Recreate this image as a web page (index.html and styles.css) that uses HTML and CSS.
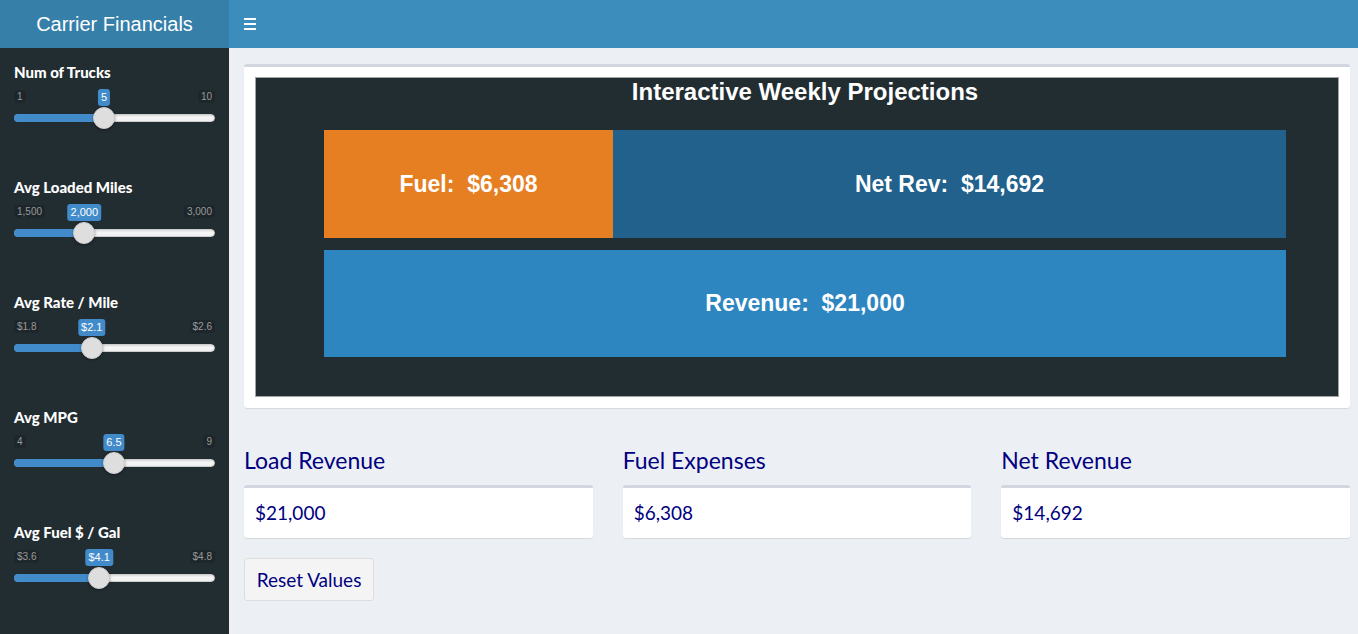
FILE: index.html
```html
<!DOCTYPE html>
<html>
<head>
<meta charset="utf-8">
<title>Carrier Financials</title>
<link rel="stylesheet" href="styles.css">
</head>
<body>
<header class="topbar">
  <div class="logo">Carrier Financials</div>
  <nav class="navbar">
    <span class="hamburger"><span></span><span></span><span></span></span>
  </nav>
</header>
<div class="layout">
  <aside class="sidebar">
    <div class="slider-group">
      <div class="slider-label">Num of Trucks</div>
      <div class="irs">
        <span class="irs-min">1</span>
        <span class="irs-max">10</span>
        <div class="irs-line"></div>
        <div class="irs-bar" style="width:90.1px"></div>
        <span class="irs-single" style="left:90.1px">5</span>
        <span class="irs-handle" style="left:79.1px"></span>
      </div>
    </div>
    <div class="slider-group">
      <div class="slider-label">Avg Loaded Miles</div>
      <div class="irs">
        <span class="irs-min">1,500</span>
        <span class="irs-max">3,000</span>
        <div class="irs-line"></div>
        <div class="irs-bar" style="width:70.3px"></div>
        <span class="irs-single" style="left:70.3px">2,000</span>
        <span class="irs-handle" style="left:59.3px"></span>
      </div>
    </div>
    <div class="slider-group">
      <div class="slider-label">Avg Rate / Mile</div>
      <div class="irs">
        <span class="irs-min">$1.8</span>
        <span class="irs-max">$2.6</span>
        <div class="irs-line"></div>
        <div class="irs-bar" style="width:77.75px"></div>
        <span class="irs-single" style="left:77.75px">$2.1</span>
        <span class="irs-handle" style="left:66.75px"></span>
      </div>
    </div>
    <div class="slider-group">
      <div class="slider-label">Avg MPG</div>
      <div class="irs">
        <span class="irs-min">4</span>
        <span class="irs-max">9</span>
        <div class="irs-line"></div>
        <div class="irs-bar" style="width:100px"></div>
        <span class="irs-single" style="left:100px">6.5</span>
        <span class="irs-handle" style="left:89px"></span>
      </div>
    </div>
    <div class="slider-group">
      <div class="slider-label">Avg Fuel $ / Gal</div>
      <div class="irs">
        <span class="irs-min">$3.6</span>
        <span class="irs-max">$4.8</span>
        <div class="irs-line"></div>
        <div class="irs-bar" style="width:85.2px"></div>
        <span class="irs-single" style="left:85.2px">$4.1</span>
        <span class="irs-handle" style="left:74.2px"></span>
      </div>
    </div>
  </aside>
  <main class="content">
    <section class="box">
      <div class="plot">
        <div class="plot-inner">
          <div class="plot-title">Interactive Weekly Projections</div>
          <div class="bar-row">
            <div class="bar bar-fuel" style="width:289px">Fuel:  $6,308</div>
            <div class="bar bar-net">Net Rev:  $14,692</div>
          </div>
          <div class="bar bar-rev">Revenue:  $21,000</div>
        </div>
      </div>
    </section>
    <section class="stats">
      <div class="stat">
        <h3 class="stat-title">Load Revenue</h3>
        <div class="stat-box">$21,000</div>
      </div>
      <div class="stat">
        <h3 class="stat-title">Fuel Expenses</h3>
        <div class="stat-box">$6,308</div>
      </div>
      <div class="stat">
        <h3 class="stat-title">Net Revenue</h3>
        <div class="stat-box">$14,692</div>
      </div>
    </section>
    <button class="btn-reset">Reset Values</button>
  </main>
</div>
</body>
</html>
```

FILE: styles.css
```css
* { box-sizing: border-box; }
html, body { margin: 0; padding: 0; height: 100%; }
body {
  font-family: "Lato", "Liberation Sans", sans-serif;
  background: #ecf0f5;
  overflow: hidden;
}
.topbar {
  display: flex;
  height: 48px;
}
.logo {
  width: 229px;
  background: #367fa9;
  color: #fff;
  font-family: "Liberation Sans", Arial, sans-serif;
  font-size: 20px;
  line-height: 48px;
  text-align: center;
}
.navbar {
  flex: 1;
  background: #3c8dbc;
  display: flex;
  align-items: center;
  padding-left: 15px;
}
.hamburger {
  display: flex;
  flex-direction: column;
  gap: 3px;
  width: 12px;
}
.hamburger span {
  display: block;
  height: 2px;
  background: #fff;
}
.layout {
  display: flex;
  height: calc(100% - 48px);
}
.sidebar {
  width: 229px;
  background: #222d32;
  padding-top: 14px;
  flex: none;
}
.slider-group {
  height: 115px;
  padding: 0 14px;
}
.slider-label {
  color: #fff;
  font-weight: 900;
  font-size: 15px;
  line-height: 20px;
}
.irs {
  position: relative;
  height: 44px;
  margin-top: 6px;
  font-family: "Liberation Sans", Arial, sans-serif;
}
.irs-min, .irs-max {
  position: absolute;
  top: 2px;
  font-size: 10px;
  line-height: 13px;
  padding: 0 3px;
  color: #999;
  background: rgba(0,0,0,0.12);
  border-radius: 3px;
}
.irs-min { left: 0; }
.irs-max { right: 0; }
.irs-single {
  position: absolute;
  top: 1px;
  transform: translateX(-50%);
  font-size: 11px;
  line-height: 15px;
  padding: 1px 3px;
  color: #fff;
  background: #428bca;
  border-radius: 3px;
}
.irs-line {
  position: absolute;
  top: 26px;
  left: 0;
  right: 0;
  height: 8px;
  border-radius: 4px;
  background: linear-gradient(#dcdcdc, #f5f5f5 40%, #f0f0f0);
  border: 1px solid #cccccc;
}
.irs-bar {
  position: absolute;
  top: 26px;
  left: 0;
  height: 8px;
  border-radius: 4px 0 0 4px;
  background: #428bca;
}
.irs-handle {
  position: absolute;
  top: 19px;
  width: 22px;
  height: 22px;
  border-radius: 50%;
  background: #dedede;
  border: 1px solid #cfcfcf;
  box-shadow: 0 1px 3px rgba(0,0,0,0.35);
}
.content {
  flex: 1;
  padding: 16px 8px 0 15px;
}
.box {
  background: #fff;
  border-top: 3px solid #d2d6de;
  border-radius: 3px;
  box-shadow: 0 1px 1px rgba(0,0,0,0.1);
  padding: 10px 11px 11px 11px;
}
.plot {
  height: 320px;
  background: #222d32;
  border: 1px solid #a0a4a6;
}
.plot-inner {
  margin: 0 52px 0 68px;
}
.plot-title {
  color: #fff;
  font-family: "Liberation Sans", Arial, sans-serif;
  font-weight: 700;
  font-size: 24px;
  line-height: 28px;
  text-align: center;
}
.bar-row {
  display: flex;
  margin-top: 24px;
  height: 108px;
}
.bar {
  display: flex;
  align-items: center;
  justify-content: center;
  color: #fff;
  font-family: "Liberation Sans", Arial, sans-serif;
  font-weight: 700;
  font-size: 23px;
  white-space: pre;
}
.bar-fuel { background: #e67e22; flex: none; }
.bar-net { background: #21618c; flex: 1; }
.bar-rev {
  background: #2e86c1;
  height: 107px;
  margin-top: 12px;
}
.stats {
  display: grid;
  grid-template-columns: repeat(3, 1fr);
  column-gap: 30px;
  margin-top: 39px;
}
.stat-title {
  margin: 0;
  font-weight: 400;
  font-size: 23px;
  line-height: 26px;
  color: #000080;
}
.stat-box {
  margin-top: 12px;
  background: #fff;
  border-top: 3px solid #d2d6de;
  border-radius: 3px;
  box-shadow: 0 1px 1px rgba(0,0,0,0.1);
  height: 53px;
  line-height: 49px;
  padding-left: 11px;
  font-size: 19px;
  color: #000080;
}
.btn-reset {
  margin-top: 20px;
  height: 43px;
  width: 130px;
  background: #f4f4f4;
  border: 1px solid #dddddd;
  border-radius: 3px;
  font-family: "Lato", "Liberation Sans", sans-serif;
  font-size: 19px;
  color: #000080;
  padding: 0;
}
```
